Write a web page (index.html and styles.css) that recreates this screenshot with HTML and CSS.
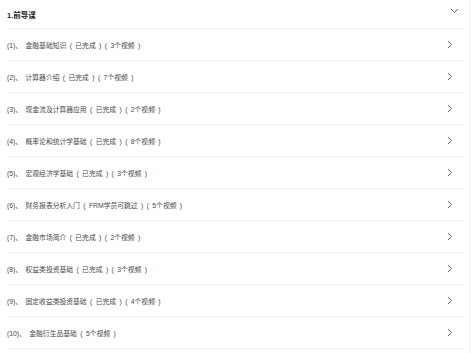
FILE: index.html
```html
<!DOCTYPE html>
<html lang="zh-CN">
<head>
    <meta charset="UTF-8">
    <title>课程目录</title>
    <link rel="stylesheet" href="styles.css">
</head>
<body>
<div id="main">
    <div class="chapter">
        <div class="chapter-head">
            <span class="chapter-title">1.前导课</span>
            <svg class="icon-down" width="9" height="6" viewBox="0 0 9 6"><path d="M1 1 L4.5 4.5 L8 1" fill="none" stroke="#666" stroke-width="1"/></svg>
        </div>
        <ul class="lessons">
            <li class="lesson"><span>(1)、 金融基础知识 ( 已完成 ) ( 3个视频 )</span><svg class="icon-right" width="6" height="9" viewBox="0 0 6 9"><path d="M1 1 L4.5 4.5 L1 8" fill="none" stroke="#666" stroke-width="1"/></svg></li>
            <li class="lesson"><span>(2)、 计算器介绍 ( 已完成 ) ( 7个视频 )</span><svg class="icon-right" width="6" height="9" viewBox="0 0 6 9"><path d="M1 1 L4.5 4.5 L1 8" fill="none" stroke="#666" stroke-width="1"/></svg></li>
            <li class="lesson"><span>(3)、 现金流及计算器应用 ( 已完成 ) ( 2个视频 )</span><svg class="icon-right" width="6" height="9" viewBox="0 0 6 9"><path d="M1 1 L4.5 4.5 L1 8" fill="none" stroke="#666" stroke-width="1"/></svg></li>
            <li class="lesson"><span>(4)、 概率论和统计学基础 ( 已完成 ) ( 8个视频 )</span><svg class="icon-right" width="6" height="9" viewBox="0 0 6 9"><path d="M1 1 L4.5 4.5 L1 8" fill="none" stroke="#666" stroke-width="1"/></svg></li>
            <li class="lesson"><span>(5)、 宏观经济学基础 ( 已完成 ) ( 3个视频 )</span><svg class="icon-right" width="6" height="9" viewBox="0 0 6 9"><path d="M1 1 L4.5 4.5 L1 8" fill="none" stroke="#666" stroke-width="1"/></svg></li>
            <li class="lesson"><span>(6)、 财务报表分析入门 ( FRM学员可跳过 ) ( 5个视频 )</span><svg class="icon-right" width="6" height="9" viewBox="0 0 6 9"><path d="M1 1 L4.5 4.5 L1 8" fill="none" stroke="#666" stroke-width="1"/></svg></li>
            <li class="lesson"><span>(7)、 金融市场简介 ( 已完成 ) ( 2个视频 )</span><svg class="icon-right" width="6" height="9" viewBox="0 0 6 9"><path d="M1 1 L4.5 4.5 L1 8" fill="none" stroke="#666" stroke-width="1"/></svg></li>
            <li class="lesson"><span>(8)、 权益类投资基础 ( 已完成 ) ( 3个视频 )</span><svg class="icon-right" width="6" height="9" viewBox="0 0 6 9"><path d="M1 1 L4.5 4.5 L1 8" fill="none" stroke="#666" stroke-width="1"/></svg></li>
            <li class="lesson"><span>(9)、 固定收益类投资基础 ( 已完成 ) ( 4个视频 )</span><svg class="icon-right" width="6" height="9" viewBox="0 0 6 9"><path d="M1 1 L4.5 4.5 L1 8" fill="none" stroke="#666" stroke-width="1"/></svg></li>
            <li class="lesson"><span>(10)、 金融衍生品基础 ( 5个视频 )</span><svg class="icon-right" width="6" height="9" viewBox="0 0 6 9"><path d="M1 1 L4.5 4.5 L1 8" fill="none" stroke="#666" stroke-width="1"/></svg></li>
        </ul>
    </div>
</div>
</body>
</html>
```

FILE: styles.css
```css
* {
    box-sizing: border-box;
    -webkit-font-smoothing: antialiased;
}

body {
    margin: 0;
    background: #fff;
    font-family: "Liberation Sans", "Noto Sans CJK SC", sans-serif;
    color: #4a4a4a;
}

#main {
    width: 470px;
    height: 353px;
    border-right: 1px solid #f2f2f2;
    padding-left: 7px;
    padding-right: 6px;
}

.chapter-head {
    height: 29px;
    display: flex;
    align-items: center;
    justify-content: space-between;
    border-bottom: 1px solid #eee;
    padding-right: 4px;
}

.chapter-title {
    font-size: 7.5px;
    font-weight: bold;
    color: #222;
    margin-top: 1px;
}

.icon-down {
    margin-top: -7px;
}

.lessons {
    list-style: none;
    margin: 0;
    padding: 0;
}

.lesson {
    height: 32px;
    display: flex;
    align-items: center;
    justify-content: space-between;
    border-bottom: 1px solid #eee;
    font-size: 6.8px;
    word-spacing: 1.5px;
    padding-right: 10px;
}
```
